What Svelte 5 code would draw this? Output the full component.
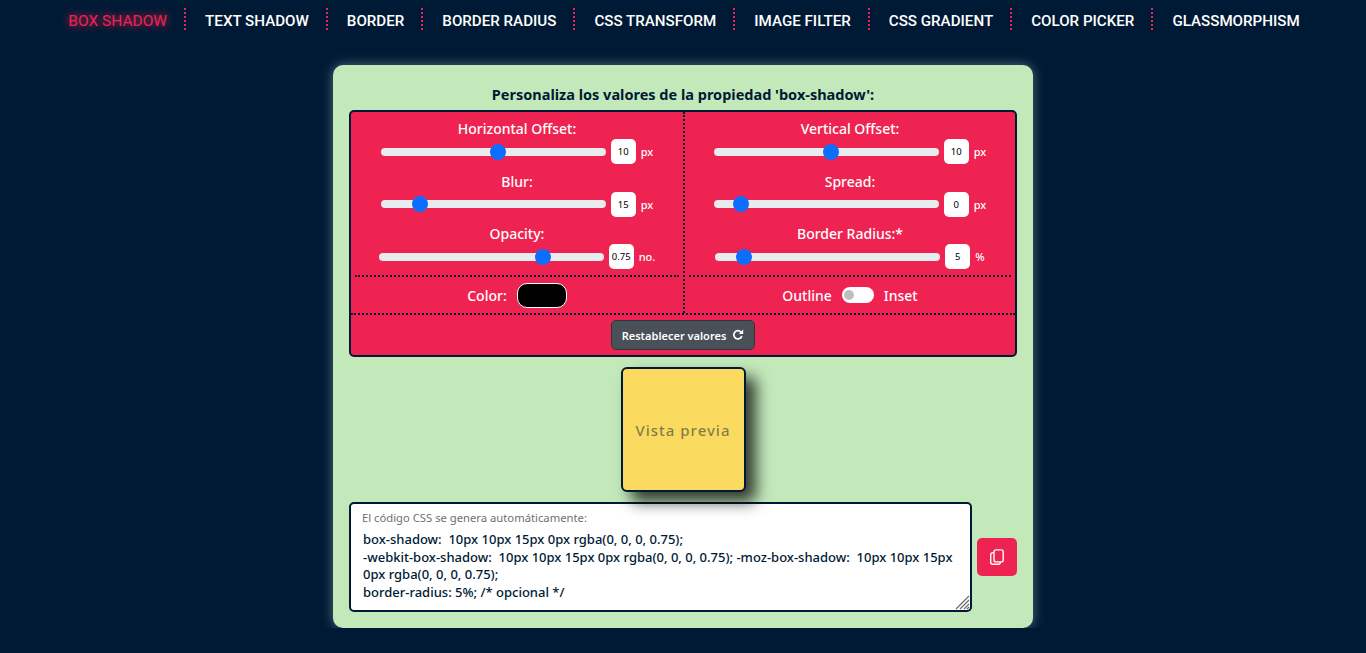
<script>
  const nav = ['BOX SHADOW','TEXT SHADOW','BORDER','BORDER RADIUS','CSS TRANSFORM','IMAGE FILTER','CSS GRADIENT','COLOR PICKER','GLASSMORPHISM'];
  const left = [
    {label:'Horizontal Offset:',min:-200,max:200,step:1,value:10,unit:'px'},
    {label:'Blur:',min:0,max:100,step:1,value:15,unit:'px'},
    {label:'Opacity:',min:0,max:1,step:0.01,value:0.75,unit:'no.'}
  ];
  const right = [
    {label:'Vertical Offset:',min:-200,max:200,step:1,value:10,unit:'px'},
    {label:'Spread:',min:-10,max:100,step:1,value:0,unit:'px'},
    {label:'Border Radius:*',min:0,max:50,step:1,value:5,unit:'%'}
  ];
  const code = `box-shadow:  10px 10px 15px 0px rgba(0, 0, 0, 0.75);
-webkit-box-shadow:  10px 10px 15px 0px rgba(0, 0, 0, 0.75); -moz-box-shadow:  10px 10px 15px 0px rgba(0, 0, 0, 0.75);
border-radius: 5%; /* opcional */`;
</script>

{#snippet slider(s)}
  <div class="ctl">
    <div class="lbl">{s.label}</div>
    <div class="sl">
      <input type="range" min={s.min} max={s.max} step={s.step} value={s.value} />
      <span class="num">{s.value}</span>
      <span class="unit">{s.unit}</span>
    </div>
  </div>
{/snippet}

<nav>
  {#each nav as n, i}
    <a href="#top" class:active={i === 0} class:last={i === nav.length - 1}>{n}</a>
  {/each}
</nav>

<main>
  <section class="card">
    <h1>Personaliza los valores de la propiedad 'box-shadow':</h1>
    <div class="panel">
      <div class="cols">
        <div class="col">
          <div class="sliders">{#each left as s}{@render slider(s)}{/each}</div>
          <div class="extra">
            <span>Color:</span>
            <span class="swatch"></span>
          </div>
        </div>
        <div class="col rightcol">
          <div class="sliders">{#each right as s}{@render slider(s)}{/each}</div>
          <div class="extra">
            <span>Outline</span>
            <span class="switch"><i></i></span>
            <span>Inset</span>
          </div>
        </div>
      </div>
      <div class="reset">
        <button>Restablecer valores
          <svg viewBox="0 0 12 12" width="12" height="12" fill="none"><path d="M9.6 7.6A4.1 4.1 0 1 1 8.9 3" stroke="currentColor" stroke-width="1.7" stroke-linecap="round"/><path d="M11.2 0.6V5H6.8z" fill="currentColor"/></svg>
        </button>
      </div>
    </div>
    <div class="previewwrap"><div class="preview">Vista previa</div></div>
    <div class="output">
      <div class="area">
        <span class="hint">El código CSS se genera automáticamente:</span>
        <textarea readonly value={code}></textarea>
        <svg class="grip" viewBox="0 0 15 15" width="15" height="15" stroke="#666" stroke-width="1.1"><path d="M1 14 14 1M5 14 14 5M9 14 14 9M12 14 14 12"/></svg>
      </div>
      <button class="copy" aria-label="Copiar">
        <svg viewBox="0 0 14 16" width="14" height="16" fill="none" stroke="currentColor" stroke-width="1.4"><rect x="4" y="0.9" width="9.2" height="12" rx="2"/><path d="M3.6 3.8H2.6A1.9 1.9 0 0 0 .7 5.7V13.2A2 2 0 0 0 2.7 15.2H8.4A1.9 1.9 0 0 0 10.300 13.300V13"/></svg>
      </button>
    </div>
  </section>
</main>

<style>
  :global(body) {
    margin: 0;
    background: #001a35;
    font-family: "Noto Sans", sans-serif;
    color: #fff;
  }
  nav {
    display: flex;
    justify-content: center;
    height: 40px;
    padding-top: 8px;
    box-sizing: border-box;
  }
  nav a {
    display: flex;
    align-items: center;
    height: 22px;
    padding: 3px 17px 0 19px;
    box-sizing: border-box;
    border-right: 2px dotted #ef2351;
    color: #fff;
    text-decoration: none;
    font-family: "Roboto", sans-serif;
    font-size: 15.15px;
    font-weight: 500;
    white-space: nowrap;
  }
  nav a.active {
    color: #ef2351;
    text-shadow: 0 0 8px #ef2351;
    font-size: 15.5px;
    font-weight: 400;
  }
  nav a.last { border-right: none; }
  main {
    display: flex;
    justify-content: center;
    padding-top: 25px;
  }
  .card {
    width: 700px;
    height: 563px;
    box-sizing: border-box;
    padding: 20px 16px 0;
    background: #c3e9bb;
    border-radius: 10px;
    box-shadow: 0 0 12px rgba(255, 255, 255, 0.35);
  }
  h1 {
    margin: 0 0 7px;
    height: 18px;
    line-height: 19px;
    text-align: center;
    font-size: 14.5px;
    font-weight: 700;
    color: #001a35;
  }
  .panel {
    height: 247px;
    box-sizing: border-box;
    background: #ef2351;
    border: 2px solid #001a35;
    border-radius: 5px;
    display: flex;
    flex-direction: column;
  }
  .cols {
    display: flex;
    height: 201px;
    border-bottom: 2px dotted #001a35;
  }
  .col {
    flex: 1;
    display: flex;
    flex-direction: column;
    min-width: 0;
  }
  .rightcol {
    flex: none;
    width: 332px;
    border-left: 2px dotted #001a35;
    box-sizing: border-box;
  }
  .sliders {
    margin: 0 4px;
    height: 165px;
    border-bottom: 2px dotted #001a35;
    padding-top: 8.2px;
    box-sizing: border-box;
  }
  .ctl { height: 52.5px; }
  .lbl {
    text-align: center;
    font-size: 14px;
    line-height: 18px;
    font-weight: 500;
  }
  .sl {
    display: flex;
    align-items: center;
    justify-content: center;
    gap: 5px;
    height: 25px;
    margin-top: 1px;
  }
  input[type=range] {
    appearance: none;
    -webkit-appearance: none;
    width: 225px;
    height: 8px;
    margin: 0;
    border-radius: 4px;
    background: #e9ecef;
    outline: none;
  }
  input[type=range]::-webkit-slider-thumb {
    -webkit-appearance: none;
    width: 16px;
    height: 16px;
    border-radius: 50%;
    background: #0d6efd;
    border: none;
  }
  .num {
    width: 25px;
    height: 25px;
    border-radius: 5px;
    background: #fff;
    color: #000;
    font-size: 9.5px;
    display: flex;
    align-items: center;
    justify-content: center;
  }
  .unit {
    font-size: 11px;
    font-weight: 500;
  }
  .extra {
    flex: 1;
    display: flex;
    align-items: center;
    justify-content: center;
    gap: 10px;
    font-size: 14px;
    font-weight: 500;
  }
  .swatch {
    width: 50px;
    height: 25px;
    box-sizing: border-box;
    background: #000;
    border: 1px solid #fff;
    border-radius: 10px;
  }
  .switch {
    width: 32px;
    height: 16px;
    border-radius: 8px;
    background: #fff;
    display: flex;
    align-items: center;
    padding-left: 2px;
    box-sizing: border-box;
  }
  .switch i {
    width: 10px;
    height: 10px;
    margin-top: -1px;
    border-radius: 50%;
    background: #bfbfbf;
  }
  .reset {
    flex: 1;
    display: flex;
    align-items: center;
    justify-content: center;
  }
  .reset button {
    width: 144px;
    height: 30px;
    box-sizing: border-box;
    background: #495057;
    color: #fff;
    border: 1px solid #2d3640;
    border-radius: 5px;
    font-family: inherit;
    font-size: 11px;
    font-weight: 600;
    display: flex;
    align-items: center;
    justify-content: center;
    gap: 6px;
    padding: 0;
  }
  .previewwrap {
    display: flex;
    justify-content: center;
    padding-top: 10px;
  }
  .preview {
    position: relative;
    z-index: 1;
    width: 125px;
    height: 125px;
    box-sizing: border-box;
    padding-top: 1px;
    background: #fadb5f;
    border: 2px solid #001a35;
    border-radius: 6px;
    box-shadow: 10px 10px 15px rgba(0, 0, 0, 0.75);
    display: flex;
    align-items: center;
    justify-content: center;
    color: rgba(0, 26, 53, 0.5);
    font-size: 15px;
    font-weight: 500;
    letter-spacing: 1px;
  }
  .output {
    display: flex;
    align-items: center;
    gap: 5px;
    margin-top: 10px;
  }
  .area {
    position: relative;
    width: 623px;
    height: 110px;
  }
  .hint {
    position: absolute;
    left: 13px;
    top: 8px;
    font-size: 11.25px;
    color: #6f6f6f;
  }
  textarea {
    display: block;
    width: 100%;
    height: 100%;
    box-sizing: border-box;
    margin: 0;
    padding: 27px 10px 3px 12px;
    border: 2px solid #001a35;
    border-radius: 5px;
    background: #fff;
    color: #001a35;
    font-family: "Noto Sans", sans-serif;
    font-size: 13px;
    font-weight: 500;
    line-height: 17.5px;
    outline: none;
    resize: none;
    overflow: hidden;
  }
  .grip {
    position: absolute;
    right: 2px;
    bottom: 2px;
  }
  .copy {
    width: 40px;
    height: 38px;
    background: #ef2351;
    color: #fff;
    border: none;
    border-radius: 5px;
    display: flex;
    align-items: center;
    justify-content: center;
    padding: 0;
  }
</style>
